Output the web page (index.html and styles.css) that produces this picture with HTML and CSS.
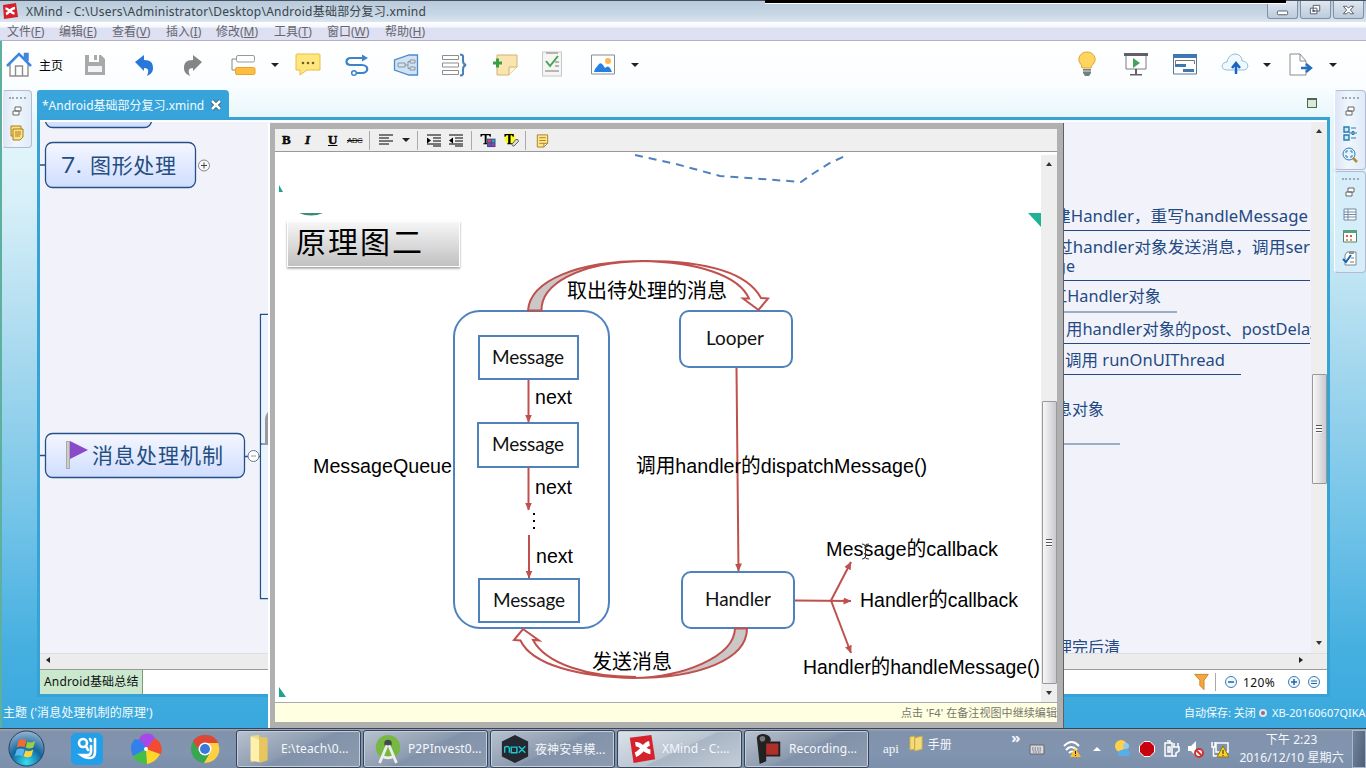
FILE: index.html
```html
<!DOCTYPE html>
<html lang="zh-CN">
<head>
<meta charset="utf-8">
<title>XMind</title>
<link rel="stylesheet" href="styles.css">
</head>
<body>
<div class="desktop">
  <header class="titlebar">
    <svg class="app-icon" viewBox="0 0 16 16"><path d="M1 2 14 0 16 14 2 16Z" fill="#d3212a"/><path d="M3.500 5.500c3 0 6 5 9 5M4 11c3-1 5-6 9-6" stroke="#fff" stroke-width="2.500" fill="none"/></svg>
    <span class="title-text">XMind - C:\Users\Administrator\Desktop\Android基础部分复习.xmind</span>
    <div class="window-buttons">
      <div class="wbtn"><svg viewBox="0 0 30 16"><rect x="9.500" y="8.500" width="11" height="4" rx="1" fill="#fff" stroke="#555b68"/></svg></div>
      <div class="wbtn"><svg viewBox="0 0 30 16"><path d="M12.500 2.500h7v6h-7zM9.500 5.500h7v6h-7zM12 8h2v1h-2z" fill="#fff" stroke="#555b68"/></svg></div>
      <div class="wbtn"><svg viewBox="0 0 30 16"><path d="M9.500 3.500h3.500l2 2 2-2h3.500l-3.500 4 3.500 4h-3.500l-2-2-2 2H9.500l3.500-4z" fill="#fff" stroke="#555b68"/></svg></div>
    </div>
    <div class="capture-edge"></div>
  </header>
  <nav class="menubar">
    <span>文件(<u>F</u>)</span><span>编辑(<u>E</u>)</span><span>查看(<u>V</u>)</span><span>插入(<u>I</u>)</span><span>修改(<u>M</u>)</span><span>工具(<u>T</u>)</span><span>窗口(<u>W</u>)</span><span>帮助(<u>H</u>)</span>
  </nav>
  <main class="workbench">
    <div class="toolbar">
      <svg class="ic" viewBox="0 0 28 28"><path d="M5 13v12h18V13M10.500 25V15h7v10" fill="#fff" stroke="#8d8d8d" stroke-width="1.400"/><path d="M2 15 14 3l12 12M20 8V3h2.500v7" fill="none" stroke="#3e86df" stroke-width="2.500"/></svg>
      <span class="home-label">主页</span>
      <svg class="ic" viewBox="0 0 28 28"><path d="M4 4h4v7h10V4h2l4 4v16H4z" fill="#a9a9a9"/><path d="M7 15h14v6H7z" fill="#f4f4f4"/><path d="M13 4h3v5h-3z" fill="#a9a9a9"/></svg>
      <svg class="ic" viewBox="0 0 28 28"><path d="M4 11 13 4v5c7 0 9 3 9 8 0 4-2 6-6 8 2-5 2-8-3-8v3z" fill="#2a77dc"/></svg>
      <svg class="ic" viewBox="0 0 28 28"><path d="M23 11 14 4v5c-7 0-9 3-9 8 0 4 2 6 6 8-2-5-2-8 3-8v3z" fill="#858585"/></svg>
      <svg class="ic" viewBox="0 0 28 28"><rect x="6.500" y="4.500" width="18" height="6.500" rx="1.500" fill="#fff" stroke="#999"/><path d="M6 8H2v11h4" fill="none" stroke="#888"/><rect x="5.500" y="16.500" width="19.500" height="7" rx="1.500" fill="#fdbd3f" stroke="#eaa329"/></svg>
      <i class="caret"></i>
      <svg class="ic" viewBox="0 0 28 28"><path d="M3 3h22q1 0 1 1v15H13l-7 5v-5H2V4q0-1 1-1z" fill="#ffe77e" stroke="#e9bd45"/><circle cx="9" cy="12" r="1.300" fill="#765c28"/><circle cx="14" cy="12" r="1.300" fill="#765c28"/><circle cx="19" cy="12" r="1.300" fill="#765c28"/></svg>
      <svg class="ic" viewBox="0 0 28 28"><path d="M20 7H8c-6 0-6 7 0 7h11c7 0 7 8 0 8h-6" fill="none" stroke="#3e82c8" stroke-width="2.200"/><path d="m19 3.500 6 3.500-6 3.500z" fill="#3e82c8"/><circle cx="11" cy="22" r="2.300" fill="#fff" stroke="#3e82c8" stroke-width="1.500"/></svg>
      <svg class="ic" viewBox="0 0 28 28"><path d="M25.500 4H17L2.500 9v10l14.500 5h8.500z" fill="#cfe3f7" stroke="#4d8bc8" stroke-width="1.300"/><path d="M6 12h7v4H6zM13 14h3M18 9h5v3h-5zM18 16h5v3h-5zM18 10.500h-2v7h2" fill="none" stroke="#8e959c"/></svg>
      <svg class="ic" viewBox="0 0 28 28"><path d="M1.500 4.500h16v4h-16zM1.500 12h16v4h-16zM1.500 19.500h16v4h-16z" fill="#fff" stroke="#8e8e8e"/><path d="M19 3.500c4 0 3 2 3 6 0 3 1 4 3 4.500-2 .5-3 1.500-3 4.500 0 4 1 6-3 6" fill="none" stroke="#457fbd" stroke-width="2"/></svg>
      <svg class="ic" viewBox="0 0 28 28"><path d="M6 4h20v12l-8 8H6z" fill="#fae5b1" stroke="#ceb375"/><path d="M26 16h-8v8" fill="#fff4d4" stroke="#ceb375"/><path d="M2 12h9M6.500 7.500v9" stroke="#39a045" stroke-width="3"/></svg>
      <svg class="ic" viewBox="0 0 28 28"><rect x="4.500" y="1" width="19" height="24" fill="#f5f5f4" stroke="#c7c7c5"/><path d="M8 1h12v2H8z" fill="#bbb1a7"/><path d="m8 10 4 5 8-10" fill="none" stroke="#48a350" stroke-width="2"/><path d="M17 11h4M17 15h4M7 20h14" stroke="#777"/></svg>
      <svg class="ic" viewBox="0 0 28 28"><path d="M2.500 4h23v19h-23z" fill="#fff" stroke="#858d96"/><circle cx="19" cy="10" r="3" fill="#ffb84e"/><path d="m5 21 1-3 4-5q2-2 4 1l2 3q3-3 5 0l2 4z" fill="#257fe0"/></svg>
      <i class="caret"></i>
      <svg class="ic" viewBox="0 0 28 28"><path d="M9 17q0-3-2-5c-3-4 0-11 7-11s10 7 7 11q-3 3-3 5z" fill="#ffd461" stroke="#dba731"/><path d="M10 18h8v4l-2 3h-4l-2-3z" fill="#747c85"/><path d="M10 20h8" stroke="#ddd"/></svg>
      <svg class="ic" viewBox="0 0 28 28"><path d="M4 4h20v14H4z" fill="#fff" stroke="#807981"/><path d="M2 2h24v3H2zM13 18h2v6h-2zM8 23h12v1.500H8z" fill="#645e66"/><path d="m11 7 7 5-7 5z" fill="#46a15d"/></svg>
      <svg class="ic" viewBox="0 0 28 28"><path d="M2.500 4h23v19h-23z" fill="#fff" stroke="#55799d"/><path d="M2 3h24v4H2zM4 13h11v3H4zM12 18h11v3H12z" fill="#3f77b1"/><path d="M4.500 13V9.500h19V13" fill="none" stroke="#777"/></svg>
      <svg class="ic" viewBox="0 0 28 28"><path d="M6 19C-1 19 0 11 6 11c2-11 15-10 15-1 7 0 8 9 1 9z" fill="#eff9ff" stroke="#91bed3"/><path d="M15 23V13m-4 4 4-5 4 5" fill="none" stroke="#1764c3" stroke-width="2.500"/></svg>
      <i class="caret"></i>
      <svg class="ic" viewBox="0 0 28 28"><path d="M4 3h10l6 7v14H4zM14 3v7h6" fill="#fff" stroke="#8c8c8c"/><path d="M15 17h9m-4-4 5 4-5 4" fill="none" stroke="#256dc0" stroke-width="2.300"/></svg>
      <i class="caret"></i>
    </div>
    <div class="workspace">
      <aside class="rail rail-left">
        <div class="dock dock-l"><b class="grip"></b>
          <svg viewBox="0 0 16 16"><path d="M6 4h6v4H6zM4 8h6v4H4z" fill="#fff" stroke="#666"/></svg>
          <svg viewBox="0 0 16 16"><path d="M2 1h10v10H2z" fill="#ffe082" stroke="#a97e1e"/><path d="M4 4h10v8l-3 3H4zM6 7h6M6 9h6M6 11h5" fill="#ffe082" stroke="#a97e1e"/></svg>
        </div>
      </aside>
      <section class="editor">
        <div class="tabs"><div class="tab"><span>*Android基础部分复习.xmind</span><svg viewBox="0 0 12 12"><path d="m2 2 8 8m0-8-8 8" stroke="#315064" stroke-width="4"/><path d="m2 2 8 8m0-8-8 8" stroke="#fff" stroke-width="2.600"/></svg></div><i class="maximize"></i></div>
        <div class="frame">
          <div class="canvas-row">
            <svg class="mindmap" viewBox="40 122 1271 531">
              <defs><linearGradient id="topic" x2="0" y2="1"><stop stop-color="#f5f7ff"/><stop offset="1" stop-color="#cfddff"/></linearGradient></defs>
              <g fill="url(#topic)" stroke="#254f87" stroke-width="1.300"><rect x="45.500" y="90" width="106" height="37.500" rx="7"/><rect x="45.500" y="142.500" width="150" height="45" rx="7"/><rect x="45.500" y="433.500" width="199" height="44" rx="7"/></g>
              <path d="M40 165H45M40 455.500H45M245 456.500H248M259 456.500H261M268 314.500H260.500V598.500H268M261 444H268" fill="none" stroke="#254f87" stroke-width="1.300"/>
              <path d="M261.500 315H268V598H261.500z" fill="#eaf4ff"/><path d="M261 444H268" stroke="#254f87"/><path d="M268 412q-3 3-3 8v25h3z" fill="#9a9a9d"/>
              <circle cx="204" cy="165.500" r="5.500" fill="#f8f8fc" stroke="#888"/><path d="M201 165.500h6m-3-3v6" stroke="#444"/><circle cx="253.500" cy="456" r="5.500" fill="#fff" stroke="#5e7694"/><path d="M251 456h5" stroke="#999"/>
              <g class="topic-text"><text x="61" y="173" textLength="21" lengthAdjust="spacingAndGlyphs">7.</text><text x="90" y="173" textLength="86">图形处理</text><text x="92" y="463" textLength="131">消息处理机制</text></g>
              <path d="M66 441h4v28h-4z" fill="#aaa"/><path d="M68 442v26" stroke="#eee"/><path d="m70 441 18 9-18 9z" fill="#8949c8"/>
              <path d="M1060 230.500h250M1060 280.500h250M1060 343.500h250M1060 374.500h181" stroke="#244a83"/><path d="M1060 312h117M1060 444h60" stroke="#7d98b5" stroke-width="1.500"/>
              <g class="leaf-text">
                <text x="1054" y="222" textLength="254" lengthAdjust="spacingAndGlyphs">建Handler，重写handleMessage</text>
                <text x="1056" y="253" textLength="254" lengthAdjust="spacingAndGlyphs">过handler对象发送消息，调用ser</text>
                <text x="1056" y="272" textLength="19">ge</text>
                <text x="1051" y="302" textLength="110" lengthAdjust="spacingAndGlyphs">工Handler对象</text>
                <text x="1066" y="335" textLength="272" lengthAdjust="spacingAndGlyphs">用handler对象的post、postDelayed</text>
                <text x="1065" y="366" textLength="160" lengthAdjust="spacingAndGlyphs">调用 runOnUIThread</text>
                <text x="1056" y="415" textLength="48">息对象</text>
                <text x="1056" y="652.500" textLength="64">理完后清</text>
              </g>
            </svg>
            <div class="vscroll outer-scroll"><i class="up"></i><div class="thumb"><i></i></div><i class="down"></i></div>
          </div>
          <div class="hscroll"><i class="left"></i><i class="right"></i></div>
          <div class="sheets"><span class="sheet">Android基础总结</span>
            <div class="zoombar">
              <svg viewBox="0 0 20 20"><path d="M2 1h16l-5 7v11l-5-5V8z" fill="#f4a640" stroke="#c67d20"/></svg><b></b>
              <svg viewBox="0 0 20 20"><circle cx="10" cy="10" r="5.500" fill="#eff8ff" stroke="#397bb6"/><path d="M7 10h6" stroke="#276495" stroke-width="1.500"/></svg><span>120%</span>
              <svg viewBox="0 0 20 20"><circle cx="10" cy="10" r="5.500" fill="#eff8ff" stroke="#397bb6"/><path d="M7 10h6m-3-3v6" stroke="#276495" stroke-width="1.500"/></svg>
              <svg viewBox="0 0 20 20"><circle cx="10" cy="10" r="5.500" fill="#eff8ff" stroke="#397bb6"/><path d="M7 9h6M7 11.500h6" stroke="#276495"/></svg>
            </div>
          </div>
        </div>
      </section>
      <aside class="rail rail-right">
        <div class="dock dock-r1"><b class="grip"></b>
          <svg viewBox="0 0 16 16"><path d="M6 4h6v4H6zM4 8h6v4H4z" fill="#fff" stroke="#666"/></svg>
          <svg viewBox="0 0 16 16"><path d="M2 2h5v5H2zM2 10h5v5H2z" fill="#cce8ff" stroke="#287bad" stroke-width="1.400"/><path d="M9 3h5M9 13h5M7 8h8M10 6.500h2v3h-2z" stroke="#287bad" fill="#fff"/></svg>
          <svg viewBox="0 0 16 16"><circle cx="7" cy="7" r="6" fill="#e1f4ff" stroke="#367cac"/><path d="M4 6V4h2m2 0h2v2m0 2v2H8m-2 0H4V8" fill="none" stroke="#367cac"/><path d="m11 11 4 4" stroke="#ba8838" stroke-width="2.500"/></svg>
        </div>
        <div class="dock dock-r2"><b class="grip"></b>
          <svg viewBox="0 0 16 16"><path d="M6 4h6v4H6zM4 8h6v4H4z" fill="#fff" stroke="#666"/></svg>
          <svg viewBox="0 0 16 16"><path d="M2 3h12v11H2zM2 6h12M2 8.500h12M2 11h12M6 3v11" fill="#fff" stroke="#738aa7"/></svg>
          <svg viewBox="0 0 16 16"><path d="M1.500 3h13v11h-13z" fill="#fff" stroke="#54836b"/><path d="M1 2h14v3H1z" fill="#55a17b"/><path d="M4 7h2v2H4zM8 7h2v2H8z" fill="#e85252"/><path d="M4 11h2v2H4zM8 11h2v2H8z" fill="#dc9e40"/></svg>
          <svg viewBox="0 0 16 16"><path d="M5 2h9v13H3V5z" fill="#fff" stroke="#7b8696"/><path d="M7 1h5v3H7z" fill="#949494"/><path d="m1 9 3 3 5-7" fill="none" stroke="#1465b0" stroke-width="2"/><path d="M9 8h3M8 12h4" stroke="#777"/></svg>
        </div>
      </aside>
    </div>
    <footer class="statusbar"><span class="status-topic">主题 ('消息处理机制的原理')</span><span class="status-save">自动保存: 关闭</span><i></i><span class="status-host">XB-20160607QIKA</span></footer>
  </main>

  <section class="note-popup">
    <div class="note-tools">
      <strong class="fmt">B</strong><em class="fmt">I</em><u class="fmt">U</u><s>ABC</s><b></b>
      <svg viewBox="0 0 16 14"><path d="M1 1.500h14M1 4.500h10M1 7.500h14M1 10.500h10" stroke="#000"/></svg><i class="caret small"></i><b></b>
      <svg viewBox="0 0 16 14"><path d="M1 1.500h14M7 4.500h8M7 7.500h8M1 10.500h14M7 12.500h8" stroke="#000"/><path d="m1 4 4 3-4 3z"/></svg>
      <svg viewBox="0 0 16 14"><path d="M1 1.500h14M7 4.500h8M7 7.500h8M1 10.500h14M7 12.500h8" stroke="#000"/><path d="m5 4-4 3 4 3z"/></svg><b></b>
      <svg viewBox="0 0 16 16"><path d="M0 1h11v3h-1L9 2.500H6.500V11H8v1H3v-1h1.500V2.500H2L1 4H0z"/><path d="M7 6h9v9H7z" fill="#384997"/><path d="M8 7h3v3H8z" fill="#d44"/><path d="M12 7h3v3h-3z" fill="#2aa4aa"/><path d="M8 11h3v3H8z" fill="#764bbd"/><path d="M12 11h3v3h-3z" fill="#b438a0"/></svg>
      <svg viewBox="0 0 16 16"><circle cx="7" cy="6" r="6" fill="#ffff1a"/><path d="M1 1h10v3h-1L9 2.500H7.500V11H9v1H4v-1h1V2.500H3L2 4H1z"/><path d="m9 12 4-5q3-1 3 2l-5 5q-2 0-2-2z" fill="#ddd" stroke="#555"/></svg><b></b>
      <svg viewBox="0 0 16 16"><path d="M3 2h11v9l-4 4H3zM5 5h7M5 8h7M5 11h5M14 11h-4v4" fill="#ffe68b" stroke="#a78027"/></svg>
    </div>
    <div class="note-body">
      <svg class="diagram" viewBox="275 152 766 550">
        <defs>
          <linearGradient id="plate" x2="0" y2="1"><stop stop-color="#f7f7f7"/><stop offset="1" stop-color="#c0c0c0"/></linearGradient>
          <filter id="plateShadow"><feDropShadow dx="0" dy="1.500" stdDeviation="1" flood-opacity=".4"/></filter>
          <marker id="head" viewBox="0 0 8 8" refX="7.500" refY="4" markerWidth="8" markerHeight="8" markerUnits="userSpaceOnUse" orient="auto"><path d="M0 .5 8 4 0 7.500z" fill="#c0504d"/></marker>
        </defs>
        <path d="M279 185l4 7h-4zM279 687l7 10h-7z" fill="#20a38d"/><path d="M1028 213h13v14z" fill="#20b295"/><path d="M299 213h24q-12 5-24 0z" fill="#388c78"/>
        <path d="M635 155 676 164 720 176 775 180 801 182 814 173 830 163 847 155" fill="none" stroke="#4f81bd" stroke-width="2" stroke-dasharray="8 6"/>
        <rect x="287.500" y="221.500" width="172" height="45" fill="url(#plate)" stroke="#fff" filter="url(#plateShadow)"/><text class="diagram-title" x="296" y="253" textLength="126">原理图二</text>
        <g class="nodes"><rect x="454" y="311" width="155" height="317" rx="26"/><rect x="479" y="336" width="99" height="43"/><rect x="478" y="423" width="100" height="44"/><rect x="479" y="579" width="100" height="43"/><rect x="680" y="311" width="112" height="56" rx="9"/><rect x="682" y="572" width="112" height="56" rx="9"/></g>
        <g class="bands"><path d="M528 310.500C530 280 579 261 645 261 575 262 541 286 541.500 310.500z" fill="#cbc7c7"/><path d="M645 261C711 261 748 274 761 298L768 298.500 758.500 310 743 298.500H749C739 276 700 262 640 261" fill="none"/><path d="M735 628.500C734 657 683 677 633 678 698 678 747 660 747 628.500z" fill="#cbc7c7"/><path d="M635 678C579 677 532 665 520.500 640.500L514 640 523 629 539 640.500 533 640C546 664 588 677 636 677" fill="#fff"/></g>
        <g class="arrows"><path d="M528.500 380V422"/><path d="M528.500 467V510"/><path d="M529 535V578"/><path d="M736.500 368 738.500 571"/><path d="M795 600.500 851 601"/><path d="M831 600.500 851 562"/><path d="M831 600.500 851 653"/></g>
        <g class="box-text"><text x="492" y="364" textLength="72">Message</text><text x="492" y="451" textLength="72">Message</text><text x="493" y="607" textLength="72">Message</text><text x="706" y="345" textLength="58">Looper</text><text x="705" y="606" textLength="66">Handler</text></g>
        <g class="free-text">
          <text x="535" y="404" textLength="37" lengthAdjust="spacingAndGlyphs">next</text><text x="535" y="494" textLength="37" lengthAdjust="spacingAndGlyphs">next</text><text x="536" y="563" textLength="37" lengthAdjust="spacingAndGlyphs">next</text>
          <text x="313" y="473" textLength="139" lengthAdjust="spacingAndGlyphs">MessageQueue</text><text x="636" y="473" textLength="291" lengthAdjust="spacingAndGlyphs">调用handler的dispatchMessage()</text>
          <text x="826" y="556" textLength="172" lengthAdjust="spacingAndGlyphs">Message的callback</text><text x="860" y="607" textLength="158" lengthAdjust="spacingAndGlyphs">Handler的callback</text><text x="803" y="674" textLength="237" lengthAdjust="spacingAndGlyphs">Handler的handleMessage()</text>
          <text x="567" y="298" textLength="160" lengthAdjust="spacingAndGlyphs">取出待处理的消息</text><text x="592" y="669" textLength="80" lengthAdjust="spacingAndGlyphs">发送消息</text>
        </g>
        <path d="M533 513h2v2h-2zM533 520h2v2h-2zM533 527h2v2h-2z"/><path d="M862 544q3 0 3 2 0-2 4-2M865.500 546v11M862 559q3 0 3-2 0 2 4 2" fill="none" stroke="#333"/>
      </svg>
      <div class="vscroll inner-scroll"><i class="up"></i><div class="thumb"><i></i></div><i class="down"></i></div>
    </div>
    <div class="note-hint">点击 'F4' 在备注视图中继续编辑</div>
  </section>

  <footer class="taskbar">
    <svg class="orb" viewBox="0 0 40 40"><defs><radialGradient id="orb" cx=".5" cy=".9" r=".9"><stop stop-color="#35e1f4"/><stop offset=".5" stop-color="#12679f"/><stop offset="1" stop-color="#9ab5d1"/></radialGradient></defs><circle cx="20" cy="20" r="18" fill="url(#orb)" stroke="#27405f"/><path d="M12 12q4-3 8 0l-2 7q-4-2-8 0z" fill="#f26a2e"/><path d="M21 13q4 2 8-1l-2 7q-4 2-8 0z" fill="#9cce43"/><path d="M10 21q4-2 8 0l-2 7q-4-2-8 0z" fill="#58b6ed"/><path d="M19 22q4 2 8-1l-2 7q-4 2-8 0z" fill="#ffd43b"/></svg>
    <svg class="pin" viewBox="0 0 32 32"><rect width="32" height="32" rx="5" fill="#239fe9"/><path d="M8 10a4 4 0 1 0 8 0 4 4 0 1 0-8 0m7 3 2 4M19 6l1 2m4-2v13q0 6-5 6-5 0-9-3h7q3 0 3-4v-5" fill="none" stroke="#fff" stroke-width="2.600" stroke-linecap="round"/></svg>
    <svg class="pin" viewBox="0 0 32 32"><path d="M16 16Q2 13 12 2q9-4 13 3z" fill="#a649e8"/><path d="M16 16 25 5q9 6 6 16-6 2-15-5z" fill="#f34b31"/><path d="m16 16 14 5q-4 8-13 10-5-5-1-15z" fill="#ffd72c"/><path d="m16 16 1 15Q7 31 3 23q1-7 13-7z" fill="#44be49"/><path d="M16 16 3 23Q-2 13 5 6q7 0 11 10z" fill="#3380ed"/><circle cx="16" cy="16" r="2" fill="#fff"/></svg>
    <svg class="pin" viewBox="0 0 32 32"><circle cx="16" cy="16" r="14" fill="#38a653"/><path d="M4 8Q9 1 17 2q9 0 12 8H16q-5 0-7 6z" fill="#dc4736"/><path d="M16 10h13q4 10-4 17-4 3-10 3l7-12z" fill="#ffd044"/><circle cx="16" cy="16" r="6.500" fill="#fff"/><circle cx="16" cy="16" r="5" fill="#3979dc"/></svg>
    <div class="tasks">
      <div class="task"><svg viewBox="0 0 32 32"><path d="m5 2 9-1v27l-9 2z" fill="#f1db83"/><path d="m14 3 9 1v24l-9 3z" fill="#e7c65d"/><path d="m9 4 5 2v24l-9-2V3z" fill="#fff0ae"/></svg><span>E:\teach\0...</span></div>
      <div class="task"><svg viewBox="0 0 32 32"><circle cx="16" cy="14" r="13" fill="#77b843"/><circle cx="16" cy="10" r="4" fill="#424b4a"/><path d="m15 12-8 19M17 12l8 19M9 23q7 5 14 0" stroke="#eee" stroke-width="3" fill="none"/></svg><span>P2PInvest0...</span></div>
      <div class="task"><svg viewBox="0 0 32 32"><path d="m16 1 14 7v16l-14 7-14-7V8z" fill="#242830"/><path d="M5 20v-6q5-2 5 2v4M12 14h6v6h-6zM20 13l7 7m0-7-7 7" fill="none" stroke="#1dc7ce" stroke-width="1.500"/></svg><span>夜神安卓模...</span></div>
      <div class="task active"><svg viewBox="0 0 32 32"><path d="m3 4 23-3 4 26-23 4z" fill="#d5222c"/><path d="M9 11c6-1 10 8 16 8M9 22c7-2 9-11 15-12" stroke="#fff" stroke-width="5" fill="none"/></svg><span>XMind - C:...</span></div>
      <div class="task"><svg viewBox="0 0 32 32"><path d="M3 4q1-4 7-4 8 1 8 7l-5 5v17l-7 3z" fill="#222"/><circle cx="9" cy="5" r="3" fill="#777"/><path d="M12 9h15v14H12z" fill="#b02f2a" stroke="#222" stroke-width="2"/></svg><span>Recording...</span></div>
    </div>
    <span class="api">api</span><svg class="folder" viewBox="0 0 16 18"><path d="m1 2 5-1v14l-5 1zM6 3l8-2v14l-8 2z" fill="#f4db76" stroke="#c9ad4c"/></svg><span class="manual">手册</span><span class="chev">»</span>
    <div class="tray">
      <svg viewBox="0 0 18 18"><path d="M2 5h14v9H2z" fill="#d6dae0" stroke="#666"/><path d="M4 8h10M4 10h10M5 12h8" stroke="#666" stroke-dasharray="1.500 1"/></svg>
      <svg viewBox="0 0 18 18"><path d="M1 6q8-8 15 0M3 10q5-6 11 0M6 13q3-3 6 0" fill="none" stroke="#fff" stroke-width="2"/><path d="m12 8 6 9H7z" fill="#fdbf2c"/><path d="M12.500 11v3m0 1v1" stroke="#222"/></svg>
      <svg viewBox="0 0 18 18"><path d="m5 11 4-4 4 4z" fill="#fff"/></svg>
      <svg viewBox="0 0 18 18"><circle cx="8" cy="6" r="6" fill="#ffd04a"/><circle cx="13" cy="6" r="3" fill="#8fcaf0"/><path d="M5 14q0-4 4-4 4-3 7 1 2 4-1 5H8q-3 0-3-2z" fill="#59aee9"/></svg>
      <svg viewBox="0 0 18 18"><path d="M6 1.500h6L16.500 6v6L12 16.500H6L1.500 12V6z" fill="#c9000d" stroke="#fff"/></svg>
      <svg viewBox="0 0 18 18"><path d="M3 3h7v13H3zM5 1h3v2M6 7h2v5H6zM12 3v4m4-4v4M11 7h6v4l-3 2v3h-4" fill="none" stroke="#fff" stroke-width="1.500"/></svg>
      <svg viewBox="0 0 18 18"><path d="M2 6h3l5-5v15l-5-5H2z" fill="#fff"/><circle cx="13" cy="13" r="4" fill="#fff" stroke="#d13131" stroke-width="2"/><path d="m10 10 6 6" stroke="#d13131" stroke-width="2"/></svg>
      <svg viewBox="0 0 18 18"><path d="M5 3h12v9H5zM1 2v5h3V2M2.500 7v9H8" fill="none" stroke="#fff" stroke-width="1.500"/><path d="m12 6 6 11H6z" fill="#ffd324" stroke="#8b7416"/><path d="M12 10v4m0 1v1" stroke="#222"/></svg>
    </div>
    <div class="clock"><span>下午 2:23</span><span>2016/12/10 星期六</span></div><i class="show-desktop"></i>
  </footer>
</div>
</body>
</html>
```

FILE: styles.css
```css
* { box-sizing: border-box; }
body { margin: 0; overflow: hidden; font: 12px "Noto Sans", "Noto Sans CJK SC", sans-serif; color: #111; white-space: nowrap; }
svg { display: block; flex: none; }
.desktop { position: relative; width: 1366px; height: 768px; display: flex; flex-direction: column; overflow: hidden; }
.titlebar { position: relative; height: 22px; flex: none; display: flex; align-items: center; padding: 0 2px 0 2px; border-top: 1px solid #46505e; background: linear-gradient(#b9cadb, #c7d7e5 65%, #dbe6f0); }
.app-icon { width: 16px; height: 16px; margin-top: -2px; }
.title-text { margin: -2px 0 0 8px; font-size: 12px; letter-spacing: .23px; color: #3b444c; }
.window-buttons { display: flex; gap: 2px; margin-left: auto; align-self: flex-start; }
.wbtn { width: 31px; height: 18px; border: 1px solid #8391a7; border-top: 0; border-radius: 0 0 3px 3px; background: linear-gradient(#dfe7f0, #bdcbdb); padding-top: 2px; }
.wbtn svg { width: 29px; height: 15px; }
.capture-edge { position: absolute; left: 765px; top: -1px; width: 521px; height: 4px; background: #000; border-bottom: 1px solid #fff; }
.menubar { height: 19px; flex: none; display: grid; grid-template-columns: 52px 53px 54px 50px 58px 53px 58px 60px; align-items: center; padding-left: 7px; color: #66666d; border-bottom: 1px solid #b1b3c9; background: linear-gradient(#fff 0, #f4f6fc 28%, #dce0f3 36%, #e0e0f2 100%); line-height: 20px; }
.workbench { height: 687px; flex: none; border-left: 2px solid #5daf9e; background: linear-gradient(#fff 0, #fafdff 45px, #e5f6fb 80px, #d7eff8 160px, #a5d8ee 320px, #72c3e8 480px, #45afe0 610px, #3aa8dd); }
.toolbar { height: 47px; display: grid; align-items: center; padding-left: 3px; grid-template-columns: 34px 42px 50px 48px 51px 41px 23px 49px 49px 49px 50px 47px 51px 42px 442px 49px 49px 50px 42px 23px 43px 34px; }
.ic { width: 28px; height: 28px; }
.home-label { font-size: 12px; color: #000; }
.caret { display: block; width: 0; height: 0; border: 4px solid transparent; border-top-color: #222; border-bottom: 0; flex: none; }
.workspace { height: 609px; display: grid; grid-template-columns: 35px 1293px 36px; }
.rail { padding-top: 2px; }
.dock { border: 1px solid #b5b9d3; border-left-color: #fff; border-radius: 4px; background: linear-gradient(90deg, #dde5f6, #eff7fd 45%, #dfebf8); display: flex; flex-direction: column; align-items: center; }
.dock svg { width: 16px; height: 16px; }
.dock-l { width: 30px; height: 58px; gap: 6px; }
.dock-r1, .dock-r2 { width: 32px; margin-left: 4px; gap: 6px; }
.dock-r1 { height: 80px; }
.dock-r2 { height: 102px; margin-top: 1px; background: #d6edfa; }
.grip { width: 17px; height: 2px; margin: 6px 0 -2px; border-top: 2px dotted #a4a7b9; flex: none; }
.editor { min-width: 0; }
.tabs { height: 29px; display: flex; justify-content: space-between; align-items: end; }
.tab { width: 192px; height: 27px; display: flex; align-items: center; background: #36a4da; border-radius: 3px 4px 0 0; color: #f1faff; padding: 3px 7px 0 5px; justify-content: space-between; }
.tab svg { width: 12px; height: 12px; }
.maximize { width: 10px; height: 10px; border: 1px solid #4c6955; border-top-width: 2px; background: #d9ead7; margin: 0 13px 9px 0; }
.frame { height: 580px; border: 3px solid #37a2d5; background: #fff; padding-top: 2px; }
.canvas-row { height: 531px; display: flex; background: #f2f3fa; }
.mindmap { width: 1271px; height: 531px; }
.topic-text { fill: #254e80; font-size: 21px; font-family: "Open Sans", "Noto Sans CJK SC", sans-serif; }
.leaf-text { fill: #244a83; font-size: 16px; font-family: "Noto Sans", "Noto Sans CJK SC", sans-serif; }
.vscroll { width: 16px; flex: none; background: #eee; display: flex; flex-direction: column; align-items: center; }
.vscroll > i { display: block; width: 0; height: 0; border: 3px solid transparent; }
.vscroll > .up { border-bottom: 4px solid #333; border-top: 0; }
.vscroll > .down { border-top: 4px solid #333; border-bottom: 0; }
.thumb { width: 15px; border: 1px solid #999; border-radius: 1px; background: linear-gradient(90deg, #f7f7f7, #e4e4e7 45%, #c9c9ce); display: flex; align-items: center; justify-content: center; }
.thumb i { width: 6px; height: 8px; background: repeating-linear-gradient(#555 0 1px, #fafafa 1px 3px); }
.outer-scroll .up { margin-top: 7px; }
.outer-scroll .thumb { margin-top: 241px; height: 110px; }
.outer-scroll .down { margin-top: 157px; }
.hscroll { height: 16px; background: #ececec; border-top: 1px solid #dedee3; display: flex; justify-content: space-between; align-items: center; padding: 0 24px 0 6px; }
.hscroll i { width: 0; height: 0; border: 3px solid transparent; }
.hscroll .left { border-right: 4px solid #222; border-left: 0; }
.hscroll .right { border-left: 4px solid #222; border-right: 0; }
.hscroll .left, .hscroll .right { margin-top: -3px; }
.sheets { height: 25px; border-top: 1px solid #999; display: flex; justify-content: space-between; }
.sheet { width: 103px; height: 24px; padding-left: 4px; line-height: 23px; letter-spacing: .15px; background: #c9e8ce; border-right: 1px solid #83977f; }
.zoombar { display: grid; grid-template-columns: 22px 6px 22px 41px 20px 20px; align-items: center; margin-right: 3px; }
.zoombar svg { width: 20px; height: 20px; }
.zoombar svg:first-child { width: 17px; height: 18px; }
.zoombar b { width: 1px; height: 18px; background: #aaa; }
.zoombar span { letter-spacing: .4px; }
.statusbar { height: 31px; display: grid; grid-template-columns: 1181px 76px 12px 95px; align-items: center; color: #f5fcff; font-size: 11px; line-height: 30px; }
.statusbar span { padding-left: 1px; }
.statusbar .status-topic { font-size: 12px; letter-spacing: .12px; }
.statusbar i { width: 8px; height: 8px; border: 2px solid #d5e7f0; border-radius: 50%; background: #a36676; }
.status-host { overflow: hidden; }

.note-popup { position: absolute; left: 268px; top: 123px; width: 796px; height: 605px; padding: 6px 6px 6px 5px; border-left: 2px solid #fff; border-right: 1px solid #606066; background: #b0b0b0; }
.note-tools { height: 23px; display: grid; grid-template-columns: 23px 23px 19px 22px 9px 24px 15px 9px 22px 23px 9px 23px 22px 9px 20px; align-items: center; padding-left: 7px; background: #efefef; border-bottom: 1px solid #999; }
.note-tools svg { width: 16px; height: 15px; }
.note-tools b { width: 1px; height: 19px; background: #aaa; }
.note-tools .fmt { font: 900 13px/18px "Liberation Serif", serif; -webkit-text-stroke: .5px #000; }
.note-tools em.fmt { font-style: italic; }
.note-tools s { font: 8px "Liberation Sans", sans-serif; letter-spacing: -.3px; }
.note-body { height: 550px; display: flex; background: #fff; }
.diagram { width: 766px; height: 550px; }
.diagram-title { font: 30px "Noto Sans CJK SC", sans-serif; }
.nodes { fill: #fff; stroke: #4f81bd; stroke-width: 2; }
.bands { stroke: #c0504d; stroke-width: 2; }
.arrows { fill: none; stroke: #c0504d; stroke-width: 2; }
.arrows > path { marker-end: url(#head); }
.box-text { font: 19px Lato, sans-serif; fill: #111; }
.free-text { font: 20.5px "Liberation Sans", "Noto Sans CJK SC", sans-serif; }
.inner-scroll { height: 547px; margin-top: 3px; }
.inner-scroll .up { margin-top: 7px; }
.inner-scroll .thumb { margin-top: 235px; height: 283px; }
.inner-scroll .down { margin-top: 7px; }
.note-hint { height: 20px; background: #ffffe1; border-top: 1px solid #aaa; text-align: right; color: #77776d; font-size: 11px; letter-spacing: .08px; line-height: 19px; }

.taskbar { height: 40px; flex: none; display: flex; align-items: center; padding-left: 7px; color: #f4f7fb; border-top: 1px solid #3b4655; background: linear-gradient(#9aa8b9, #8091aa 7%, #8295b0 60%, #7c8faa); }
.orb { width: 39px; height: 39px; }
.pin { width: 32px; height: 32px; margin-left: 25px; }
.pin + .pin { margin-left: 27px; }
.orb + .pin { margin-left: 25px; }
.pin + .tasks { margin-left: 15px; }
.tasks { display: flex; gap: 2px; }
.task { width: 125px; height: 38px; display: flex; align-items: center; border: 1px solid #374457; border-radius: 3px; box-shadow: inset 0 0 0 1px #c4cfdb; background: linear-gradient(155deg, #b8c2cf, #8d9baf 48%, #8292aa 52%, #8c9bae); }
.task svg { width: 30px; height: 30px; margin-left: 9px; }
.task span { width: 76px; margin-left: 5px; letter-spacing: .1px; }
.task.active { background: linear-gradient(155deg, #dbe2e9, #bac5d1 50%, #a8b5c4 52%, #c3cdd7); }
.api { margin-left: 14px; width: 26px; font: 13px "Liberation Serif", serif; }
.folder { width: 15px; height: 17px; margin-top: -10px; }
.manual { margin: -9px 0 0 4px; width: 84px; }
.chev { width: 17px; margin-top: -24px; font-size: 15px; font-weight: bold; }
.tray { display: grid; grid-template-columns: 35px 25px 25px 25px 24px 24px 25px 20px; }
.tray svg { width: 18px; height: 18px; }
.clock { width: 122px; display: flex; flex-direction: column; align-items: center; line-height: 18px; font-size: 12px; letter-spacing: .1px; }
.show-desktop { width: 14px; height: 38px; margin-left: auto; border: 1px solid #aab8c9; background: linear-gradient(100deg, #71849b, #4e6077); }
```
